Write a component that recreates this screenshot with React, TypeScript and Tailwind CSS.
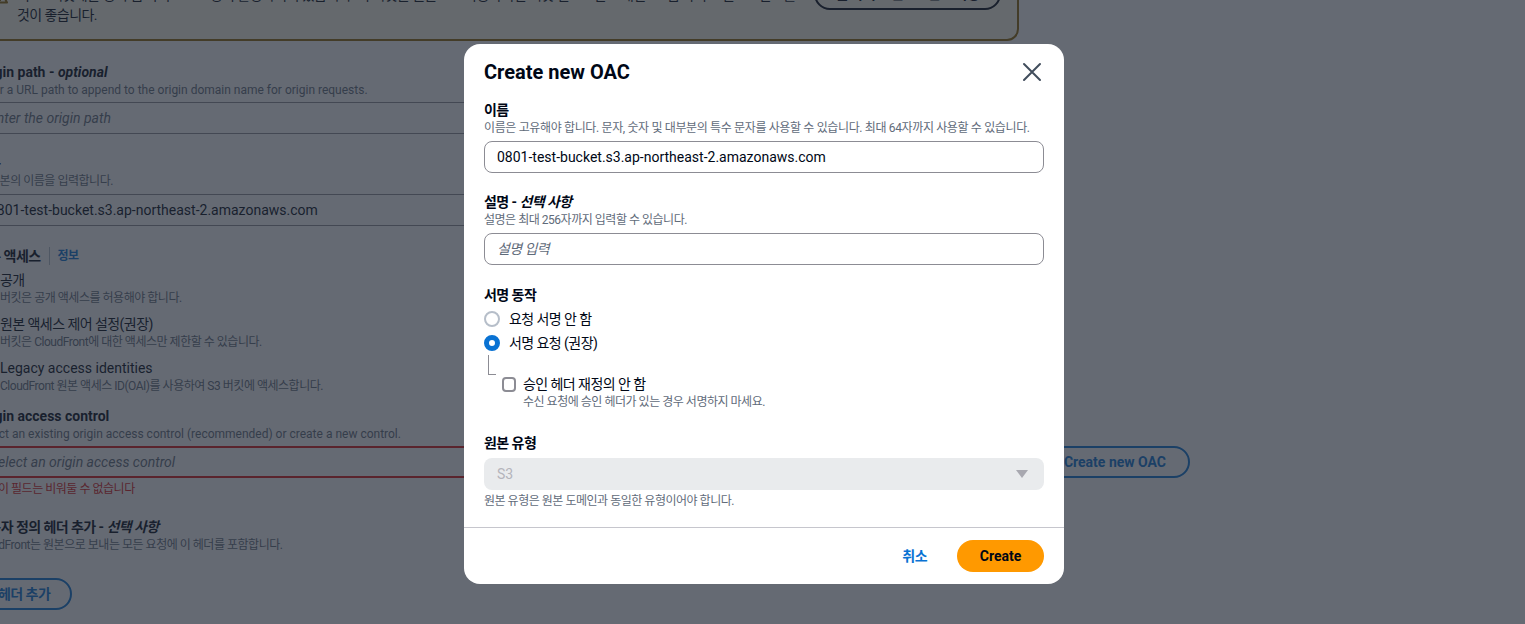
import React from "react";

const ko = "tracking-[-0.04em]";

function Radio({ checked }: { checked?: boolean }) {
  return checked ? (
    <span className="block w-4 h-4 shrink-0 rounded-full border-[5px] border-[#0972d3] bg-white" />
  ) : (
    <span className="block w-4 h-4 shrink-0 rounded-full border-2 border-[#b6bec9] bg-white" />
  );
}

function WarnIcon() {
  return (
    <svg width="16" height="16" viewBox="0 0 16 16" className="shrink-0">
      <path d="M8 1.5 15 14.5H1Z" fill="none" stroke="#8d6605" strokeWidth="2" strokeLinejoin="round" />
      <path d="M8 6v4M8 11.5v1.5" stroke="#8d6605" strokeWidth="2" />
    </svg>
  );
}

function ErrIcon() {
  return (
    <svg width="16" height="16" viewBox="0 0 16 16" className="shrink-0">
      <circle cx="8" cy="8" r="7" fill="none" stroke="#d91515" strokeWidth="2" />
      <path d="M5 5l6 6M11 5l-6 6" stroke="#d91515" strokeWidth="2" />
    </svg>
  );
}

function Option({ label, desc, checked, latin }: { label: string; desc: string; checked?: boolean; latin?: boolean }) {
  return (
    <div className="flex items-start gap-[8px]">
      <div className="mt-[2px]">
        <Radio checked={checked} />
      </div>
      <div>
        <div className={`h-5 text-sm leading-5 whitespace-nowrap ${latin ? "" : ko}`}>{label}</div>
        <div className={`h-4 text-xs leading-4 text-[#5f6b7a] whitespace-nowrap ${ko}`}>{desc}</div>
      </div>
    </div>
  );
}

function BackgroundPage() {
  return (
    <div className="w-[1214px] -ml-[24px] flex flex-col text-[#000716]">
      {/* warning alert */}
      <div className="w-[1043px] -mt-[40px] h-[81px] border-2 border-[#8d6605] bg-[#fffce9] rounded-xl flex items-start pl-[14px] pr-[16px] pt-[16px]">
        <div className="mt-[10px]">
          <WarnIcon />
        </div>
        <div className={`ml-[9px] mt-[7px] flex-1 text-sm leading-5 ${ko}`}>
          <div className="h-5 whitespace-nowrap">이 S3 버킷에는 정적 웹 사이트 호스팅이 활성화되어 있습니다. 이 버킷을 원본으로 사용하려면 버킷 엔드포인트 대신 S3 웹 사이트 엔드포인트를</div>
          <div className="h-5">것이 좋습니다.</div>
        </div>
        <button className={`w-[187px] h-[32px] rounded-full border-2 border-[#000716] text-sm font-bold ${ko}`}>
          웹 사이트 엔드포인트 사용
        </button>
      </div>

      {/* origin path */}
      <div className="mt-[21px] w-[1043px]">
        <div className="h-5 text-sm font-bold leading-5">
          Origin path - <i>optional</i>
        </div>
        <div className="h-4 text-xs leading-4 text-[#5f6b7a]">Enter a URL path to append to the origin domain name for origin requests.</div>
        <div className="mt-[4px] h-[32px] border border-[#8c8c94] rounded-lg px-[12px] flex items-center text-sm italic text-[#5f6b7a]">
          Enter the origin path
        </div>
      </div>

      {/* name */}
      <div className="mt-[19px] w-[1043px]">
        <div className={`h-5 text-sm font-bold leading-5 ${ko}`}>이름</div>
        <div className={`h-4 text-xs leading-4 text-[#5f6b7a] ${ko}`}>이 원본의 이름을 입력합니다.</div>
        <div className="mt-[5px] h-[32px] border border-[#8c8c94] rounded-lg px-[12px] flex items-center text-sm">
          0801-test-bucket.s3.ap-northeast-2.amazonaws.com
        </div>
      </div>

      {/* origin access */}
      <div className="mt-[20px] w-[1043px]">
        <div className="flex items-center h-5">
          <span className={`text-sm font-bold ${ko}`}>원본 액세스</span>
          <span className="mx-[8px] w-px h-[18px] bg-[#b6bec9]" />
          <span className={`text-xs font-bold text-[#0972d3] ${ko}`}>정보</span>
        </div>
        <div className="mt-[4px] flex flex-col gap-[8px]">
          <Option label="공개" desc="버킷은 공개 액세스를 허용해야 합니다." />
          <Option label="원본 액세스 제어 설정(권장)" desc="버킷은 CloudFront에 대한 액세스만 제한할 수 있습니다." checked />
          <Option label="Legacy access identities" desc="CloudFront 원본 액세스 ID(OAI)를 사용하여 S3 버킷에 액세스합니다." latin />
        </div>
      </div>

      {/* origin access control */}
      <div className="mt-[12px]">
        <div className="h-5 text-sm font-bold leading-5">Origin access control</div>
        <div className="h-4 text-xs leading-4 text-[#5f6b7a]">Select an existing origin access control (recommended) or create a new control.</div>
        <div className="mt-[4px] flex items-center gap-[10px]">
          <div className="w-[1054px] h-[32px] border-2 border-[#d91515] rounded-lg px-[12px] flex items-center text-sm italic text-[#5f6b7a]">
            Select an origin access control
          </div>
          <button className="h-[32px] px-[22px] rounded-full border-2 border-[#0972d3] text-sm font-bold text-[#0972d3]">
            Create new OAC
          </button>
        </div>
        <div className="mt-[3px] flex items-center gap-[6px] h-4">
          <ErrIcon />
          <span className={`text-xs text-[#d91515] ${ko}`}>이 필드는 비워둘 수 없습니다</span>
        </div>
      </div>

      {/* custom headers */}
      <div className="mt-[20px] w-[1043px]">
        <div className={`h-5 text-sm font-bold leading-5 ${ko}`}>
          사용자 정의 헤더 추가 - <i>선택 사항</i>
        </div>
        <div className={`h-4 text-xs leading-4 text-[#5f6b7a] ${ko}`}>CloudFront는 원본으로 보내는 모든 요청에 이 헤더를 포함합니다.</div>
        <button className={`mt-[25px] h-[32px] px-[20px] rounded-full border-2 border-[#0972d3] text-sm font-bold text-[#0972d3] ${ko}`}>
          헤더 추가
        </button>
      </div>
    </div>
  );
}

function Modal() {
  return (
    <div className="ml-[464px] mt-[44px] w-[600px] h-[540px] bg-white rounded-2xl flex flex-col text-[#000716]">
      <div className="pt-[16px] pl-[20px] pr-[22px] flex items-center justify-between">
        <h2 className="text-[20px] font-bold leading-6">Create new OAC</h2>
        <svg width="20" height="20" viewBox="0 0 20 20" fill="none" stroke="#414d5c" strokeWidth="2" strokeLinecap="round">
          <path d="M2 2l16 16M18 2 2 18" />
        </svg>
      </div>

      <div className="pt-[16px] px-[20px] flex flex-col">
        <div className={`h-5 text-sm font-bold leading-5 ${ko}`}>이름</div>
        <div className={`h-4 text-xs leading-4 text-[#5f6b7a] whitespace-nowrap tracking-[-0.03em]`}>
          이름은 고유해야 합니다. 문자, 숫자 및 대부분의 특수 문자를 사용할 수 있습니다. 최대 64자까지 사용할 수 있습니다.
        </div>
        <div className="mt-[5px] h-[32px] border border-[#8c8c94] rounded-lg px-[12px] flex items-center text-sm">
          0801-test-bucket.s3.ap-northeast-2.amazonaws.com
        </div>

        <div className={`mt-[19px] h-5 text-sm font-bold leading-5 ${ko}`}>
          설명 - <i>선택 사항</i>
        </div>
        <div className={`h-4 text-xs leading-4 text-[#5f6b7a] ${ko}`}>설명은 최대 256자까지 입력할 수 있습니다.</div>
        <div className={`mt-[5px] h-[32px] border border-[#8c8c94] rounded-lg px-[12px] flex items-center text-sm italic text-[#5f6b7a] ${ko}`}>
          설명 입력
        </div>

        <div className={`mt-[20px] h-5 text-sm font-bold leading-5 ${ko}`}>서명 동작</div>
        <div className="mt-[2px] flex items-center gap-[9px] h-6">
          <Radio />
          <span className={`text-sm ${ko}`}>요청 서명 안 함</span>
        </div>
        <div className="flex items-center gap-[9px] h-6">
          <Radio checked />
          <span className={`text-sm ${ko}`}>서명 요청 (권장)</span>
        </div>
        <div className="flex items-start">
          <div className="ml-[4px] w-[8px] h-[20px] border-l border-b border-[#8c8c94]" />
          <div className="mt-[19px] ml-[6px] flex items-start gap-[7px]">
            <span className="mt-[3px] w-[14px] h-[15px] border-2 border-[#8c8c94] rounded-[4px] bg-white" />
            <div>
              <div className={`h-5 text-sm leading-5 ${ko}`}>승인 헤더 재정의 안 함</div>
              <div className={`h-4 text-xs leading-4 text-[#5f6b7a] ${ko}`}>수신 요청에 승인 헤더가 있는 경우 서명하지 마세요.</div>
            </div>
          </div>
        </div>

        <div className={`mt-[23px] h-5 text-sm font-bold leading-5 ${ko}`}>원본 유형</div>
        <div className="mt-[5px] h-[32px] rounded-lg bg-[#e9ebed] pl-[13px] pr-[16px] flex items-center justify-between text-sm text-[#b4b4bb]">
          <span>S3</span>
          <svg width="12" height="8" viewBox="0 0 12 8">
            <path d="M0 0h12L6 8Z" fill="#a8a8b0" />
          </svg>
        </div>
        <div className={`mt-[3px] h-4 text-xs leading-4 text-[#5f6b7a] ${ko}`}>원본 유형은 원본 도메인과 동일한 유형이어야 합니다.</div>
      </div>

      <div className="mt-auto border-t border-[#c6c6cd] pt-[12px] pb-[12px] pr-[20px] flex items-center justify-end gap-[30px]">
        <span className={`text-sm font-bold text-[#0972d3] ${ko}`}>취소</span>
        <button className="h-[32px] w-[87px] rounded-full bg-[#ff9900] text-sm font-bold text-[#000716]">Create</button>
      </div>
    </div>
  );
}

export default function App() {
  return (
    <div className="relative w-full h-[624px] overflow-hidden bg-white font-[Roboto,'Noto_Sans_CJK_KR',sans-serif]">
      <BackgroundPage />
      <div className="absolute inset-0 bg-[rgba(35,43,55,0.7)]">
        <Modal />
      </div>
    </div>
  );
}
